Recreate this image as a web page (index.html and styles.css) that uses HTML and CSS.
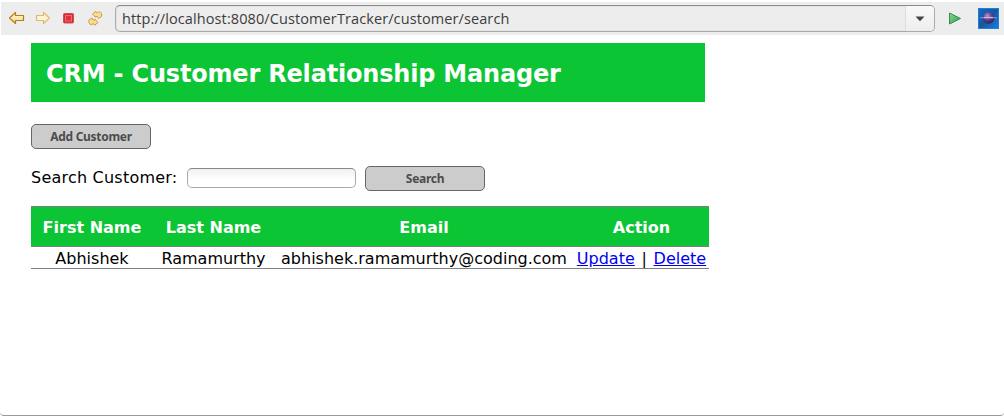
FILE: index.html
```html
<!DOCTYPE html>
<html lang="en">
<head>
<meta charset="utf-8">
<title>CRM - Customer Relationship Manager</title>
<link rel="stylesheet" href="styles.css">
</head>
<body>
<div class="window">
  <div class="toolbar">
    <svg class="tools" width="114" height="33" viewBox="0 2 114 33">
      <defs>
        <linearGradient id="gold" x1="0" y1="0" x2="0" y2="1"><stop offset="0" stop-color="#fffbe5"/><stop offset="1" stop-color="#f8d979"/></linearGradient>
        <path id="swirl" d="M92.500 14 L95.800 11.300 L96.500 12.700 C98.500 12.600 99 12 99.700 11.500 C101.500 13 102 14.500 101.600 16.500 L98.500 18.500 L97.500 16.500 H95.500 L95.500 17.300 Z" fill="#f9de92" stroke="#c9923a" stroke-width=".9" stroke-linejoin="round"/>
      </defs>
      <path d="M9.500 18 L15.500 12.500 V15.500 H23.500 V20.500 H15.500 V23.500 Z" fill="url(#gold)" stroke="#b87d18" stroke-width="1.200" stroke-linejoin="round"/>
      <path d="M49.500 18 L43.500 12.500 V15.500 H36.500 V20.500 H43.500 V23.500 Z" fill="#fbf3d4" stroke="#dfbb70" stroke-width="1.200" stroke-linejoin="round"/>
      <rect x="63.500" y="13.500" width="10" height="9.500" rx="1" fill="#dc2732" stroke="#c9525a"/>
      <rect x="65.500" y="15.500" width="6" height="5.500" fill="#e0303b" stroke="#ee6c73"/>
      <use href="#swirl"/>
      <use href="#swirl" transform="rotate(180 95.250 18.250)"/>
    </svg>
    <div class="address">
      <span class="url">http://localhost:8080/CustomerTracker/customer/search</span>
      <span class="drop"><svg width="10" height="6" viewBox="0 0 10 6"><path d="M.5 .5H9.500L5 5.300Z" fill="#444"/></svg></span>
    </div>
    <svg class="launch" width="69" height="33" viewBox="935 2 69 33">
      <defs>
        <linearGradient id="go" x1="0" y1="0" x2="1" y2="1"><stop offset="0" stop-color="#90d398"/><stop offset="1" stop-color="#27a449"/></linearGradient>
        <linearGradient id="sky" x1="0" y1="0" x2="1" y2="1"><stop offset="0" stop-color="#126ac5"/><stop offset=".5" stop-color="#1b559f"/><stop offset="1" stop-color="#1681df"/></linearGradient>
        <radialGradient id="ball" cx=".4" cy=".3" r=".75"><stop offset="0" stop-color="#b294cf"/><stop offset=".5" stop-color="#5c3f8a"/><stop offset="1" stop-color="#291c52"/></radialGradient>
      </defs>
      <path d="M949.500 13 L960.500 18.500 L949.500 24 Z" fill="url(#go)" stroke="#328c4b" stroke-linejoin="round"/>
      <rect x="978.500" y="8.500" width="20" height="20" fill="url(#sky)" stroke="#1c80dc"/>
      <circle cx="988.500" cy="18" r="5.800" fill="url(#ball)"/>
      <path d="M980 17.700 H997" stroke="#8b7fd0" stroke-width="1.200"/>
      <path d="M984 17.500 H993" stroke="#cdb9e4" stroke-width="1.200"/>
    </svg>
  </div>
  <main class="page">
    <h1 class="banner">CRM - Customer Relationship Manager</h1>
    <button class="btn add">Add Customer</button>
    <form class="search">
      <label class="label" for="q">Search Customer:</label>
      <input class="field" id="q" type="text">
      <button class="btn" type="button">Search</button>
    </form>
    <table class="customers">
      <colgroup><col class="c1"><col class="c2"><col class="c3"><col class="c4"></colgroup>
      <tr class="head"><th>First Name</th><th>Last Name</th><th>Email</th><th>Action</th></tr>
      <tr class="row"><td>Abhishek</td><td>Ramamurthy</td><td>abhishek.ramamurthy@coding.com</td><td class="actions"><a href="#">Update</a> | <a href="#">Delete</a></td></tr>
    </table>
  </main>
</div>
</body>
</html>
```
FILE: styles.css
```css
* { box-sizing: border-box; }
body {
  margin: 0;
  background: #fff;
  color: #000;
  font: 16px/19px "DejaVu Sans", Verdana, sans-serif;
}
.window {
  height: 416px;
  padding-top: 2px;
  border-bottom: 1px solid #999;
  border-radius: 0 0 4px 4px;
  overflow: hidden;
}
.toolbar {
  display: flex;
  height: 33px;
  margin-left: 1px;
  background: #ededed;
}
.tools { flex: none; margin-left: -1px; margin-right: 1px; }
.address {
  display: flex;
  flex: none;
  width: 820px;
  height: 27px;
  margin-top: 3px;
  border: 1px solid #aaa;
  border-top-color: #8c8c8c;
  border-radius: 5px;
  background: #ededed;
  box-shadow: inset 0 0 1px #999;
  overflow: hidden;
}
.url {
  flex: 1;
  padding-left: 6px;
  color: #3c3c3c;
  font: 14.5px/25px "Open Sans", "Noto Sans", sans-serif;
  letter-spacing: 0.1px;
  white-space: nowrap;
}
.drop {
  display: flex;
  align-items: center;
  justify-content: center;
  width: 29px;
  border-left: 1px solid #ddd;
  background: linear-gradient(#f9f9f9, #eee);
}
.launch { flex: none; }
.page { padding: 8px 0 0 31px; }
.banner {
  width: 674px;
  height: 59px;
  margin: 0;
  padding-left: 15px;
  background: #0bc534;
  color: #fff;
  font-size: 24px;
  line-height: 62px;
  letter-spacing: -0.19px;
  white-space: nowrap;
}
.btn {
  width: 120px;
  height: 25px;
  padding: 0;
  border: 1px solid #666;
  border-radius: 5px;
  background: #ccc;
  color: #4c4c4c;
  font: bold 12px/23px "Noto Sans", sans-serif;
  letter-spacing: -0.3px;
}
.add { display: block; margin-top: 22px; }
.search { display: flex; align-items: center; height: 25px; margin: 17px 0 0; }
.label { width: 156px; height: 22px; letter-spacing: 0.22px; white-space: nowrap; }
.field {
  width: 169px;
  height: 20px;
  margin: 0 9px 1px 0;
  border: 1px solid #aaa;
  border-top-color: #888;
  border-radius: 5px;
  background: linear-gradient(#f0f0f0, #fff 60%);
}
.customers {
  width: 678px;
  margin-top: 15px;
  table-layout: fixed;
  border-collapse: collapse;
  text-align: center;
  white-space: nowrap;
}
.c1 { width: 122px; }
.c2 { width: 121px; }
.c3 { width: 300px; }
.c4 { width: 135px; }
.customers th { padding: 2px 0 0; }
.customers td { padding: 2px 0 0; }
.head { height: 40px; background: #0bc534; color: #fff; }
.row { height: 22px; }
.head, .row { border-top: 1px solid #808080; border-bottom: 1px solid #808080; }
.customers .actions { word-spacing: 1.6px; }
.customers a { color: #00e; }
```
